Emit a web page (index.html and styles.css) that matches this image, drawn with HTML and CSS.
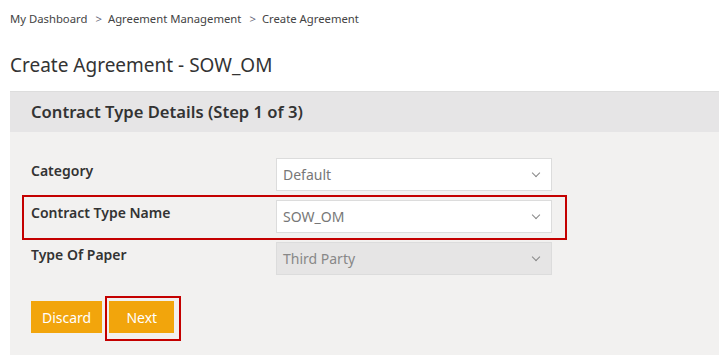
FILE: index.html
```html
<html>
    <head>
<link rel="stylesheet" href="styles.css">
    </head>
    <body>
        <div class="page">
            <div class="crumbs">
                <a>My Dashboard</a><span class="sep">&gt;</span><a>Agreement Management</a><span class="sep">&gt;</span><a>Create Agreement</a>
            </div>
            <h1 class="title">Create Agreement - SOW_OM</h1>
            <div class="panel">
                <div class="panel-head">Contract Type Details (Step 1 of 3)</div>
                <div class="panel-body">
                    <div class="row">
                        <label>Category</label>
                        <div class="select">Default<span class="chev"></span></div>
                    </div>
                    <div class="row marked">
                        <label>Contract Type Name</label>
                        <div class="select">SOW_OM<span class="chev"></span></div>
                    </div>
                    <div class="row">
                        <label>Type Of Paper</label>
                        <div class="select disabled">Third Party<span class="chev"></span></div>
                    </div>
                    <div class="actions">
                        <button class="btn">Discard</button>
                        <button class="btn marked">Next</button>
                    </div>
                </div>
            </div>
        </div>
    </body>
</html>
```

FILE: styles.css
```css
/* Page basics */
body {
    margin: 0;
    background: #fff;
    font-family: "Noto Sans", "Open Sans", sans-serif;
    color: #333;
}
.page {
    padding: 11px 1px 0 10px;
}
/* Breadcrumb trail */
.crumbs {
    font-size: 11.3px;
    color: #444;
    line-height: 16px;
}
.crumbs .sep {
    color: #667;
    margin: 0 6px 0 8px;
}
.title {
    margin: 25px 0 0 0;
    font-size: 19px;
    font-weight: normal;
    color: #333;
    line-height: 26px;
}
/* Grey panel */
.panel {
    margin-top: 13px;
    background: #f2f1f0;
    border-top: 1px solid #ddd;
}
.panel-head {
    background: #e6e5e6;
    height: 40px;
    line-height: 40px;
    padding-left: 21px;
    font-size: 16.6px;
    font-weight: 600;
    color: #333;
}
.panel-body {
    padding: 26px 0 22px 21px;
}
/* Form rows */
.row {
    position: relative;
    display: grid;
    width: fit-content;
    grid-template-columns: 245px 276px;
    align-items: start;
    margin-bottom: 9px;
}
.row label {
    font-size: 14px;
    font-weight: 600;
    color: #333;
    padding-top: 3px;
}
.select {
    display: flex;
    justify-content: space-between;
    align-items: center;
    height: 31px;
    padding: 0 12px 0 6px;
    background: #fff;
    border: 1px solid #dcdcdc;
    font-size: 14px;
    color: #777;
}
.select.disabled {
    background: #e6e5e5;
    color: #888;
}
/* Small chevron in selects */
.chev {
    width: 5px;
    height: 5px;
    border-right: 1px solid #888;
    border-bottom: 1px solid #888;
    transform: rotate(45deg);
    margin-top: -3px;
}
/* Buttons */
.actions {
    display: flex;
    gap: 7px;
    margin-top: 26px;
}
.btn {
    position: relative;
    height: 32px;
    padding: 0 11px;
    border: 0;
    background: #f2a50c;
    color: #fff;
    font-family: inherit;
    font-size: 14px;
}
.btn.marked {
    width: 65px;
}
/* Red annotation boxes */
.row.marked::after {
    content: "";
    position: absolute;
    left: -9px;
    right: -15px;
    top: -5px;
    bottom: -7px;
    border: 2px solid #c40000;
}
.btn.marked::after {
    content: "";
    position: absolute;
    left: -4px;
    right: -7px;
    top: -5px;
    bottom: -8px;
    border: 2px solid #c40000;
}
```
